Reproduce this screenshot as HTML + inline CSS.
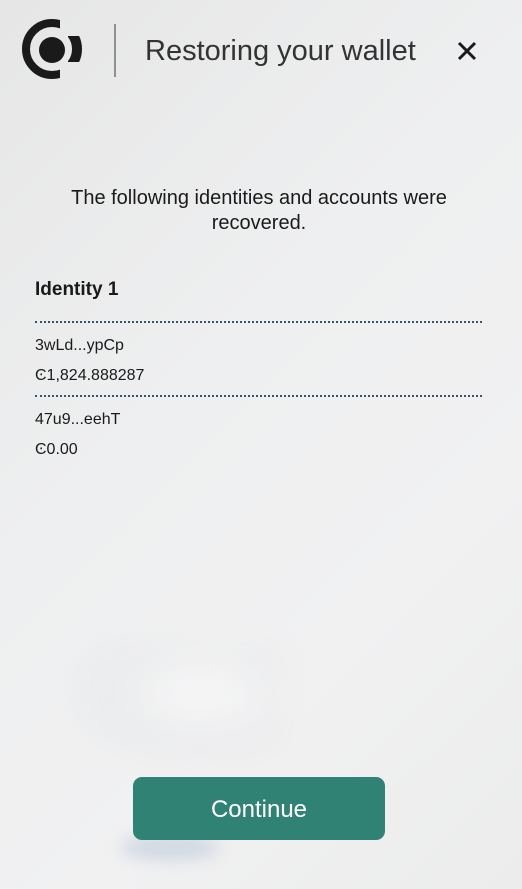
<!DOCTYPE html>
<html><head><style>
body{margin:0;width:522px;height:889px;overflow:hidden;font-family:"Liberation Sans",sans-serif;color:#1a1a1a;
background:linear-gradient(135deg,#e6e6e6 0%,#eeeff0 40%,#f1f1f2 70%,#ebeceb 100%);position:relative}
.t{position:absolute;white-space:nowrap}
.dot{position:absolute;left:35px;width:447px;border-top:2px dotted #3b5566}
</style></head><body>
<div style="position:absolute;left:80px;top:650px;width:200px;height:110px;background:radial-gradient(ellipse at 60% 40%,rgba(255,255,255,.5),rgba(220,222,224,.3) 60%,rgba(0,0,0,0) 75%);filter:blur(14px)"></div>
<div style="position:absolute;left:120px;top:835px;width:100px;height:25px;background:rgba(160,180,205,.4);filter:blur(8px);border-radius:50%"></div>
<svg style="position:absolute;left:0;top:0" width="140" height="100">
<defs><clipPath id="c1"><rect x="0" y="0" width="60" height="100"/></clipPath><clipPath id="c2"><rect x="68" y="36" width="20" height="26"/></clipPath></defs>
<circle cx="52" cy="49" r="26" fill="none" stroke="#1a1a1a" stroke-width="8" clip-path="url(#c1)"/>
<circle cx="52" cy="50" r="13" fill="#1a1a1a"/>
<circle cx="52" cy="49" r="25" fill="none" stroke="#1a1a1a" stroke-width="10" clip-path="url(#c2)"/>
<line x1="115" y1="24" x2="115" y2="77" stroke="#555" stroke-width="1.2"/>
</svg>
<div class="t" style="left:145px;top:35px;font-size:29px;color:#333">Restoring your wallet</div>
<svg style="position:absolute;left:456px;top:40px" width="22" height="22"><path d="M3 3L19 19M19 3L3 19" stroke="#1a1a1a" stroke-width="3"/></svg>
<div class="t" style="left:0;width:518px;text-align:center;top:186px;font-size:20px;line-height:25px;white-space:normal">The following identities and accounts were<br>recovered.</div>
<div class="t" style="left:35px;top:279px;font-size:19px;font-weight:bold">Identity 1</div>
<div class="dot" style="top:321px"></div>
<div class="t" style="left:35px;top:337px;font-size:16px">3wLd...ypCp</div>
<div class="t" style="left:35px;top:367px;font-size:16px">Ͼ1,824.888287</div>
<div class="dot" style="top:395px"></div>
<div class="t" style="left:35px;top:411px;font-size:16px">47u9...eehT</div>
<div class="t" style="left:35px;top:441px;font-size:16px">Ͼ0.00</div>
<div style="position:absolute;left:133px;top:777px;width:252px;height:63px;background:#308374;border-radius:9px;color:#fff;font-size:24px;text-align:center;line-height:65px">Continue</div>
</body></html>
